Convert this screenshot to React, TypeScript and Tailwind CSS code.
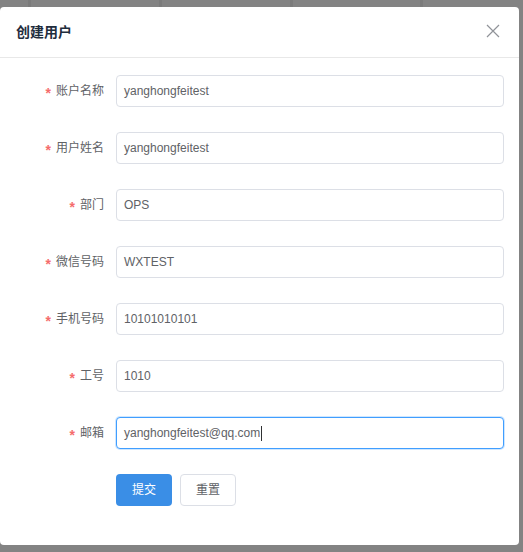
import React from "react";

// Create-user dialog over a dimmed table page

type Field = {
  label: string;
  value: string;
  focused?: boolean;
};

const fields: Field[] = [
  { label: "账户名称", value: "yanghongfeitest" },
  { label: "用户姓名", value: "yanghongfeitest" },
  { label: "部门", value: "OPS" },
  { label: "微信号码", value: "WXTEST" },
  { label: "手机号码", value: "10101010101" },
  { label: "工号", value: "1010" },
  { label: "邮箱", value: "yanghongfeitest@qq.com", focused: true },
];

const font = {
  fontFamily: '"Liberation Sans", Arial, "Noto Sans CJK SC", sans-serif',
};

function FormRow({ field }: { field: Field }) {
  return (
    <div className="flex h-[32px] items-center mb-[25px]">
      <div className="flex w-[104px] shrink-0 items-center justify-end text-[12px] text-[#606266]">
        <span className="mr-[5px] mt-[3px] text-[14px] leading-none font-bold text-[#f56c6c]">*</span>
        {field.label}
      </div>
      <div
        className={
          field.focused
            ? "ml-[12px] flex h-[32px] w-[388px] items-center rounded-[4px] border border-[#409eff] bg-white px-[7px] text-[12px] text-[#606266] shadow-[0_0_0_1px_rgba(64,158,255,0.25)]"
            : "ml-[12px] flex h-[32px] w-[388px] items-center rounded-[4px] border border-[#dcdfe6] bg-white px-[7px] text-[12px] text-[#606266]"
        }
      >
        <span>{field.value}</span>
        {field.focused && (
          <span className="ml-[1px] inline-block h-[15px] w-[1px] bg-[#303133]" />
        )}
      </div>
    </div>
  );
}

export default function App() {
  return (
    <div className="h-[552px] w-[523px] overflow-hidden bg-[#838383]" style={font}>
      {/* dimmed page behind the dialog */}
      <div className="flex h-[7px]">
        <div className="w-[31px] border-r-[3px] border-[#7b7b7b]" />
        <div className="w-[131px] border-r-[3px] border-[#7b7b7b]" />
        <div className="w-[131px] border-r-[3px] border-[#7b7b7b]" />
        <div className="w-[130px] border-r-[3px] border-[#7b7b7b]" />
      </div>

      {/* dialog */}
      <div className="h-[538px] w-[519px] rounded-[4px] bg-white">
        <div className="flex h-[51px] items-center justify-between border-b border-[#e8e8e8] pl-[16px] pr-[19px]">
          <span className="text-[14px] font-semibold text-[#1f2d3d]">创建用户</span>
          <svg width="14" height="14" viewBox="0 0 14 14" className="mt-[-2px]">
            <path d="M1 1 L13 13 M13 1 L1 13" stroke="#909399" strokeWidth="1.2" fill="none" />
          </svg>
        </div>

        <div className="pt-[17px]">
          {fields.map((f) => (
            <FormRow key={f.label} field={f} />
          ))}

          <div className="flex gap-[8px] pl-[116px]">
            <button className="h-[32px] w-[56px] rounded-[4px] bg-[#3a8ee6] text-[12px] text-white">
              提交
            </button>
            <button className="h-[32px] w-[56px] rounded-[4px] border border-[#dcdfe6] bg-white text-[12px] text-[#606266]">
              重置
            </button>
          </div>
        </div>
      </div>
    </div>
  );
}
